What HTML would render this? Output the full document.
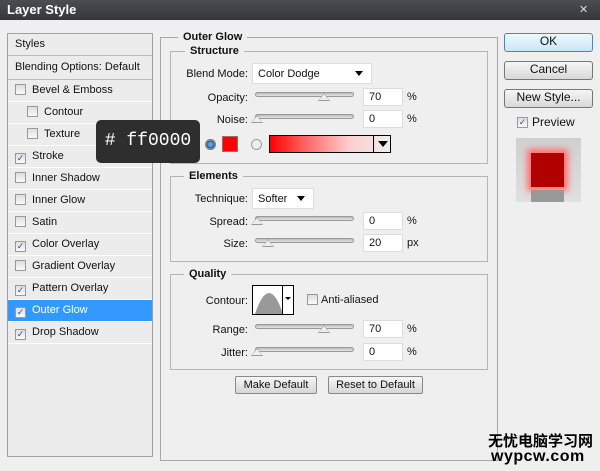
<!DOCTYPE html>
<html><head><meta charset="utf-8"><style>
*{box-sizing:border-box;margin:0;padding:0}
body{width:600px;height:471px;overflow:hidden;background:#efefef;font-family:"Liberation Sans",Tahoma,sans-serif;font-size:11px;color:#111;position:relative}
.a{position:absolute}
.title{left:0;top:0;width:600px;height:20px;background:linear-gradient(#4a4d52,#34373b);color:#fff;font-weight:bold;font-size:13px;padding:2px 7px}
.left{left:7px;top:33px;width:146px;height:424px;border:1px solid #a0a0a0;background:#ececec}
.row{position:absolute;left:0;width:144px;height:22px;border-bottom:1px solid #fff;padding-left:7px;line-height:21px}
.cb{display:inline-block;width:11px;height:11px;border:1px solid #999;background:linear-gradient(#ddd,#fafafa);vertical-align:-2px;margin-right:6px;font-size:9px;line-height:9px;text-align:center;color:#2a4fa0}
.fs{border:1px solid #a8a8a8}
.leg{position:absolute;background:#efefef;font-weight:bold;padding:0 5px;top:-7px;line-height:13px}
.lbl{text-align:right;width:80px}
.sl{height:5px;border:1px solid #999;border-radius:3px;background:linear-gradient(#bbb,#e5e5e5)}
.th{width:0;height:0;border-left:6px solid transparent;border-right:6px solid transparent;border-bottom:8px solid #999}
.th:after{content:"";position:absolute;left:-5px;top:1px;border-left:5px solid transparent;border-right:5px solid transparent;border-bottom:6px solid #eee}
.inp{background:#fff;border:1px solid #ddd;height:18px;padding:2px 5px;line-height:13px}
.btn{border:1px solid #777;border-radius:3px;background:linear-gradient(#f6f6f6,#d8d8d8);text-align:center;font-size:12px}
.sbtn{border:1px solid #888;border-radius:2px;background:linear-gradient(#f6f6f6,#d6d6d6);text-align:center;line-height:16px}
.dd:after{content:"";position:absolute;right:8px;top:7px;border-left:4px solid transparent;border-right:4px solid transparent;border-top:5px solid #000}
</style></head><body>
<div class="a title">Layer Style</div>
<div class="a" style="right:8px;top:3px;width:13px;height:13px;color:#ddd;font-size:11px">✕</div>

<div class="a left">
<div class="row" style="top:0;height:22px;border-bottom:1px solid #bbb">Styles</div>
<div class="row" style="top:23px;height:23px;border-bottom:1px solid #bbb">Blending Options: Default</div>
<div class="row" style="top:46px"><span class="cb"></span>Bevel &amp; Emboss</div>
<div class="row" style="top:68px;padding-left:19px"><span class="cb"></span>Contour</div>
<div class="row" style="top:90px;padding-left:19px"><span class="cb"></span>Texture</div>
<div class="row" style="top:112px"><span class="cb">✓</span>Stroke</div>
<div class="row" style="top:134px"><span class="cb"></span>Inner Shadow</div>
<div class="row" style="top:156px"><span class="cb"></span>Inner Glow</div>
<div class="row" style="top:178px"><span class="cb"></span>Satin</div>
<div class="row" style="top:200px"><span class="cb">✓</span>Color Overlay</div>
<div class="row" style="top:222px"><span class="cb"></span>Gradient Overlay</div>
<div class="row" style="top:244px"><span class="cb">✓</span>Pattern Overlay</div>
<div class="row" style="top:266px;background:#3399ff;color:#fff"><span class="cb">✓</span>Outer Glow</div>
<div class="row" style="top:288px"><span class="cb">✓</span>Drop Shadow</div>
</div>

<div class="a fs" style="left:160px;top:37px;width:338px;height:424px"><span class="leg" style="left:17px">Outer Glow</span></div>
<div class="a fs" style="left:170px;top:51px;width:318px;height:113px;border-color:#b5b5b5"><span class="leg" style="left:14px;background:#efefef">Structure</span></div>
<div class="a lbl" style="left:168px;top:68px">Blend Mode:</div>
<div class="a inp dd" style="left:252px;top:63px;width:120px;height:21px;padding-top:4px">Color Dodge</div>
<div class="a lbl" style="left:168px;top:92px">Opacity:</div>
<div class="a sl" style="left:255px;top:92px;width:99px"></div>
<div class="a th" style="left:318px;top:93px"></div>
<div class="a inp" style="left:363px;top:88px;width:40px">70</div>
<div class="a" style="left:407px;top:91px">%</div>
<div class="a lbl" style="left:168px;top:114px">Noise:</div>
<div class="a sl" style="left:255px;top:114px;width:99px"></div>
<div class="a th" style="left:251px;top:115px"></div>
<div class="a inp" style="left:363px;top:110px;width:40px">0</div>
<div class="a" style="left:407px;top:113px">%</div>
<div class="a" style="left:205px;top:139px;width:11px;height:11px;border-radius:50%;border:1px solid #777;background:radial-gradient(#5aa0e0 30%,#1a4f8a 60%,#ddd 70%)"></div>
<div class="a" style="left:222px;top:136px;width:16px;height:16px;background:#f00;border:1px solid #a66"></div>
<div class="a" style="left:251px;top:139px;width:11px;height:11px;border-radius:50%;border:1px solid #999;background:#eee"></div>
<div class="a" style="left:269px;top:135px;width:122px;height:18px;border:1px solid #000;background:linear-gradient(90deg,#f00,#f66 30%,#fcc 65%,#eee)"></div>
<div class="a" style="left:373px;top:135px;width:1px;height:18px;background:#000"></div>
<div class="a" style="left:378px;top:141px;border-left:5px solid transparent;border-right:5px solid transparent;border-top:6px solid #000"></div>

<div class="a" style="left:96px;top:120px;width:104px;height:43px;background:#2e2e2e;border-radius:5px;color:#fff;font-family:'Liberation Mono',monospace;font-size:18px;line-height:43px;text-align:center">#&nbsp;ff0000</div>

<div class="a fs" style="left:170px;top:176px;width:318px;height:86px;border-color:#b5b5b5"><span class="leg" style="left:13px">Elements</span></div>
<div class="a lbl" style="left:168px;top:193px">Technique:</div>
<div class="a inp dd" style="left:252px;top:188px;width:62px;height:21px;padding-top:4px">Softer</div>
<div class="a lbl" style="left:168px;top:216px">Spread:</div>
<div class="a sl" style="left:255px;top:216px;width:99px"></div>
<div class="a th" style="left:251px;top:217px"></div>
<div class="a inp" style="left:363px;top:212px;width:40px">0</div>
<div class="a" style="left:407px;top:215px">%</div>
<div class="a lbl" style="left:168px;top:238px">Size:</div>
<div class="a sl" style="left:255px;top:238px;width:99px"></div>
<div class="a th" style="left:262px;top:239px"></div>
<div class="a inp" style="left:363px;top:234px;width:40px">20</div>
<div class="a" style="left:407px;top:237px">px</div>

<div class="a fs" style="left:170px;top:274px;width:318px;height:96px;border-color:#b5b5b5"><span class="leg" style="left:13px">Quality</span></div>
<div class="a lbl" style="left:168px;top:295px">Contour:</div>
<div class="a" style="left:252px;top:285px;width:42px;height:30px;border:1px solid #000;background:#fff;overflow:hidden">
<svg width="40" height="28" style="position:absolute;left:0;top:0"><path d="M2 28 Q16 -14 30 28Z" fill="#999"/></svg>
<div class="a" style="left:29px;top:0;width:1px;height:28px;background:#000"></div>
<div class="a" style="left:32px;top:11px;border-left:3px solid transparent;border-right:3px solid transparent;border-top:3px solid #000"></div></div>
<div class="a cb" style="left:307px;top:294px"></div>
<div class="a" style="left:321px;top:294px">Anti-aliased</div>
<div class="a lbl" style="left:168px;top:324px">Range:</div>
<div class="a sl" style="left:255px;top:324px;width:99px"></div>
<div class="a th" style="left:318px;top:325px"></div>
<div class="a inp" style="left:363px;top:320px;width:40px">70</div>
<div class="a" style="left:407px;top:323px">%</div>
<div class="a lbl" style="left:168px;top:347px">Jitter:</div>
<div class="a sl" style="left:255px;top:347px;width:99px"></div>
<div class="a th" style="left:251px;top:348px"></div>
<div class="a inp" style="left:363px;top:343px;width:40px">0</div>
<div class="a" style="left:407px;top:346px">%</div>

<div class="a sbtn" style="left:235px;top:376px;width:82px;height:18px">Make Default</div>
<div class="a sbtn" style="left:328px;top:376px;width:95px;height:18px">Reset to Default</div>

<div class="a btn" style="left:504px;top:33px;width:89px;height:19px;border-color:#3c8ec0;background:linear-gradient(#eef8fd,#c9e6f5)">OK</div>
<div class="a btn" style="left:504px;top:61px;width:89px;height:19px">Cancel</div>
<div class="a btn" style="left:504px;top:89px;width:89px;height:19px">New Style...</div>
<div class="a cb" style="left:517px;top:117px">✓</div>
<div class="a" style="left:532px;top:115px;font-size:12px">Preview</div>
<div class="a" style="left:516px;top:138px;width:65px;height:64px;background:linear-gradient(#d0d0d0,#e0e0e0)">
<div class="a" style="left:15px;top:15px;width:33px;height:34px;background:#b00000;box-shadow:0 0 6px 4px #ff7070"></div>
<div class="a" style="left:15px;top:52px;width:33px;height:12px;background:#999"></div></div>

<div class="a" style="left:488px;top:432px;font-family:'Noto Sans CJK SC',sans-serif;font-size:15px;font-weight:bold;color:#000;line-height:17px">无忧电脑学习网</div>
<div class="a" style="left:491px;top:449px;font-size:16px;font-weight:bold;color:#000;line-height:16px;letter-spacing:0.5px">wypcw.com</div>
</body></html>
